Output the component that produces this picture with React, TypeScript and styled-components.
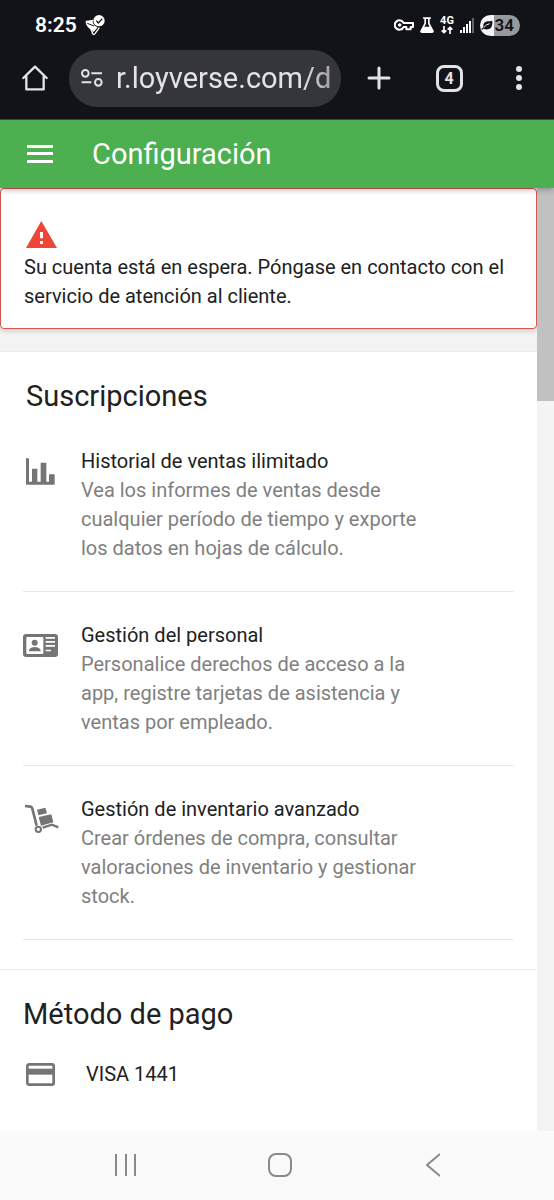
import React from 'react';
import styled, { createGlobalStyle } from 'styled-components';

const GlobalStyle = createGlobalStyle`
  *, *::before, *::after { box-sizing: border-box; }
  body { margin: 0; background: #fff; font-family: Roboto, "Liberation Sans", sans-serif; }
  h1, h2, h3, p, ul { margin: 0; padding: 0; font-weight: 400; }
  button { border: 0; padding: 0; background: none; color: inherit; font: inherit; cursor: pointer; }
  svg { display: block; flex: none; }
`;

const Page = styled.div`
  display: flex;
  flex-direction: column;
  min-height: 100vh;
`;

const StatusBar = styled.div`
  display: flex;
  align-items: center;
  justify-content: space-between;
  height: 50px;
  padding: 0 34px 0 35px;
  background: #111318;
  color: #fff;
`;

const StatusGroup = styled.div<{ $gap: number }>`
  display: flex;
  align-items: center;
  gap: ${(p) => p.$gap}px;
`;

const Clock = styled.time`
  font: 600 21px/24px Roboto, sans-serif;
`;

const Network = styled.span`
  display: flex;
  flex-direction: column;
  align-items: center;
  width: 14px;
  font: 700 11px/10px Roboto, sans-serif;
`;

const Battery = styled.span`
  display: flex;
  align-items: center;
  justify-content: space-between;
  width: 40px;
  height: 21px;
  padding: 0 6px 0 1px;
  border-radius: 11px;
  background: linear-gradient(90deg, #f4f4f4 34%, #98999b 34%);
  color: #111318;
  font: 600 17px/21px Roboto, sans-serif;
`;

const BrowserBar = styled.div`
  display: flex;
  align-items: center;
  height: 70px;
  padding: 0 0 13px 22px;
  background: #111318;
  border-bottom: 1px solid #33503c;
  color: #e3e2e9;
`;

const AddressPill = styled.label`
  display: flex;
  flex: 1;
  align-items: center;
  gap: 13px;
  min-width: 0;
  height: 57px;
  margin: 0 3px 0 21px;
  padding: 0 8px 0 12px;
  border-radius: 29px;
  background: #35363b;
`;

const Address = styled.input`
  flex: 1;
  min-width: 0;
  height: 40px;
  padding: 0;
  border: 0;
  outline: 0;
  background: none;
  color: #e3e2e9;
  font: 400 29px/40px Roboto, sans-serif;
  mask-image: linear-gradient(90deg, #000 85%, rgba(0, 0, 0, 0.6));
`;

const BarAction = styled.button`
  display: flex;
  align-items: center;
  justify-content: center;
  width: 70px;
  height: 57px;
`;

const TabCount = styled.span`
  width: 27px;
  height: 27px;
  border: 3px solid #e3e2e9;
  border-radius: 8px;
  font: 700 16px/21px Roboto, sans-serif;
  text-align: center;
`;

const AppHeader = styled.header`
  position: relative;
  z-index: 1;
  display: flex;
  align-items: center;
  gap: 39px;
  height: 68px;
  padding: 0 27px;
  background: #4caf50;
  color: #fff;
  box-shadow: 0 2px 6px rgba(0, 0, 0, 0.26);
`;

const HeaderTitle = styled.h1`
  font-size: 29px;
  line-height: 36px;
`;

const Viewport = styled.div`
  display: flex;
  flex: 1;
  background: #f3f3f3;
`;

const Content = styled.main`
  display: flex;
  flex: 1;
  flex-direction: column;
  min-width: 0;
`;

const ScrollTrack = styled.div`
  width: 17px;
  background: #f4f4f4;
`;

const ScrollThumb = styled.div`
  height: 213px;
  background: #c1c1c1;
`;

const Alert = styled.section`
  padding: 32px 24px 17px 23px;
  margin-bottom: 22px;
  border: 1px solid #d2564b;
  border-radius: 4px;
  background: #fff;
  box-shadow: 0 2px 5px rgba(0, 0, 0, 0.16);
  color: #212121;
  font-size: 20px;
  line-height: 29px;

  svg { margin: 0 0 5px 2px; }
`;

const Card = styled.section<{ $grow?: boolean }>`
  flex: ${(p) => (p.$grow ? '1 0 auto' : 'none')};
  padding: 27px 23px 29px 23px;
  border-top: 1px solid #ececec;
  background: #fff;
`;

const CardTitle = styled.h2<{ $indent: number }>`
  padding-left: ${(p) => p.$indent}px;
  color: #212121;
  font-size: 29px;
  line-height: 34px;
`;

const FeatureList = styled.ul`
  padding-top: 5px;
  list-style: none;
`;

const Feature = styled.li`
  display: flex;
  gap: 23px;
  padding: 29px 80px 28px 0;
  border-bottom: 1px solid #e8e8e8;
  font-size: 20px;
  line-height: 29px;
`;

const FeatureIcon = styled.span`
  display: flex;
  flex: none;
  align-items: center;
  justify-content: center;
  width: 35px;
  height: 48px;
  color: #757575;
`;

const FeatureName = styled.h3`
  color: #212121;
  font-size: 20px;
  line-height: 29px;
`;

const FeatureText = styled.p`
  color: #808080;
`;

const PaymentRow = styled.div`
  display: flex;
  align-items: center;
  gap: 31px;
  padding: 29px 0 0 3px;
  color: #212121;
  font-size: 20px;
  line-height: 29px;
`;

const SystemNav = styled.nav`
  display: grid;
  grid-template-columns: repeat(3, 28%);
  justify-content: center;
  height: 69px;
  padding: 0 0 2px 5px;
  background: #fafafa;
`;

const NavButton = styled.button`
  display: flex;
  align-items: center;
  justify-content: center;
`;

const SendIcon = () => (
  <svg width="20" height="21" viewBox="0 0 60 63" aria-hidden="true">
    <path d="M2 20 22 16Q24 33 38 37L26 51 15 41Q4 33 2 20Z" fill="#fff" />
    <path d="M24 17 4 19Q3 30 18 42L23 56Q26 61 30 56L43 38" stroke="#fff" strokeWidth="4" strokeLinejoin="round" fill="none" />
    <path d="M7 25 27 33" stroke="#111318" strokeWidth="3" />
    <circle cx="42" cy="17" r="17" fill="#fff" />
    <path d="m34 17 6 7 12-13" stroke="#111318" strokeWidth="4" fill="none" />
  </svg>
);

const KeyIcon = () => (
  <svg width="20" height="12" viewBox="0 0 60 36" fill="none" stroke="#fff" strokeWidth="6" aria-hidden="true">
    <path d="M29 12A14 14 0 1 0 29 24H37V31H50V24H57V12Z" strokeLinejoin="round" />
    <circle cx="17" cy="18" r="4" fill="#fff" strokeWidth="3" />
  </svg>
);

const FlaskIcon = () => (
  <svg width="14" height="16" viewBox="0 0 42 48" aria-hidden="true">
    <path d="M9 1H33V5H29V19L41 41Q43 48 36 48H6Q-1 48 1 41L13 19V5H9Z" fill="#fff" />
    <path d="M18 6H24V20L29 29H13L18 20Z" fill="#111318" />
  </svg>
);

const ArrowsIcon = () => (
  <svg width="12" height="8" viewBox="0 0 36 24" fill="none" stroke="#fff" strokeWidth="5" aria-hidden="true">
    <path d="M9 0V20M2 13 9 20 16 13M27 24V4M20 11 27 4 34 11" />
  </svg>
);

const SignalIcon = () => (
  <svg width="14" height="15" viewBox="0 0 14 15" fill="#fff" aria-hidden="true">
    <path d="M0 12h2v3H0zM3 9h2v6H3zM6 6h2v9H6zM9 3h2v12H9z" />
    <path d="M12 0h2v15h-2z" opacity="0.35" />
  </svg>
);

const LeafIcon = () => (
  <svg width="12" height="12" viewBox="0 0 36 36" aria-hidden="true">
    <path d="M34 5Q36 29 20 31Q13 32 8 29L3 33 1 30 7 25Q5 9 19 7Q28 7 34 5Z" fill="#111318" />
    <path d="M8 26Q15 16 26 14" stroke="#f4f4f4" strokeWidth="3" fill="none" />
  </svg>
);

const HomeIcon = () => (
  <svg width="26" height="26" viewBox="0 0 78 78" fill="none" stroke="currentColor" strokeWidth="7" strokeLinejoin="round" strokeLinecap="round" aria-hidden="true">
    <path d="M4 39 39 5 74 39M13 34V73H65V34" />
  </svg>
);

const TuneIcon = () => (
  <svg width="22" height="20" viewBox="0 0 66 60" fill="none" stroke="currentColor" strokeWidth="6" aria-hidden="true">
    <circle cx="13" cy="16" r="10" />
    <path d="M31 16H63M2 43H31" />
    <circle cx="52" cy="43" r="10" />
  </svg>
);

const PlusIcon = () => (
  <svg width="24" height="24" viewBox="0 0 24 24" stroke="currentColor" strokeWidth="3" strokeLinecap="round" aria-hidden="true">
    <path d="M12 2v20M2 12h20" />
  </svg>
);

const DotsIcon = () => (
  <svg width="6" height="24" viewBox="0 0 6 24" fill="currentColor" aria-hidden="true">
    <circle cx="3" cy="3" r="3" />
    <circle cx="3" cy="12" r="3" />
    <circle cx="3" cy="21" r="3" />
  </svg>
);

const MenuIcon = () => (
  <svg width="26" height="18" viewBox="0 0 26 18" fill="currentColor" aria-hidden="true">
    <path d="M0 0h26v3H0zM0 7h26v3H0zM0 15h26v3H0z" />
  </svg>
);

const WarningIcon = () => (
  <svg width="31" height="27" viewBox="0 0 93 81" aria-hidden="true">
    <path d="M46 0 93 81H0Z" fill="#f04438" />
    <path d="M42 33h9v19h-9zM42 60h9v9h-9z" fill="#fff" />
  </svg>
);

const ChartIcon = () => (
  <svg width="29" height="27" viewBox="0 0 87 81" fill="currentColor" aria-hidden="true">
    <path d="M0 1H9V71H18V32H34V71H44V14H61V71H69V49H86V80H0Z" />
  </svg>
);

const StaffCardIcon = () => (
  <svg width="35" height="23" viewBox="0 0 105 69" aria-hidden="true">
    <rect width="105" height="69" rx="9" fill="currentColor" />
    <rect x="10" y="9" width="51" height="51" rx="3" fill="#fff" />
    <circle cx="35" cy="26" r="9" fill="currentColor" />
    <path d="M18 52V48Q22 39 35 39T53 48V52Z" fill="currentColor" />
    <path d="M68 9h28v5H68zM68 21h28v5H68zM68 33h28v5H68zM68 47h16v5H68z" fill="#fff" />
  </svg>
);

const HandTruckIcon = () => (
  <svg width="36" height="32" viewBox="0 0 108 96" aria-hidden="true">
    <path d="M6 9 22 11Q27 12 28 17L41 68" fill="none" stroke="currentColor" strokeWidth="8" />
    <path d="M42 20 67 14 72 31 46 37ZM47 42 85 34 91 58 54 68Z" fill="currentColor" />
    <circle cx="46" cy="79" r="8" fill="none" stroke="currentColor" strokeWidth="6" />
    <path d="M59 74 87 65 106 73" fill="none" stroke="currentColor" strokeWidth="7" />
  </svg>
);

const PaymentIcon = () => (
  <svg width="29" height="23" viewBox="0 0 87 69" aria-hidden="true">
    <rect x="4" y="4" width="79" height="61" rx="5" fill="none" stroke="#757575" strokeWidth="8" />
    <path d="M4 17h79v18H4z" fill="#757575" />
  </svg>
);

const features = [
  {
    name: 'Historial de ventas ilimitado',
    text: 'Vea los informes de ventas desde cualquier período de tiempo y exporte los datos en hojas de cálculo.',
    Icon: ChartIcon,
  },
  {
    name: 'Gestión del personal',
    text: 'Personalice derechos de acceso a la app, registre tarjetas de asistencia y ventas por empleado.',
    Icon: StaffCardIcon,
  },
  {
    name: 'Gestión de inventario avanzado',
    text: 'Crear órdenes de compra, consultar valoraciones de inventario y gestionar stock.',
    Icon: HandTruckIcon,
  },
];

export default function App() {
  return (
    <>
      <GlobalStyle />
      <Page>
        <StatusBar>
          <StatusGroup $gap={8}>
            <Clock>8:25</Clock>
            <SendIcon />
          </StatusGroup>
          <StatusGroup $gap={6}>
            <KeyIcon />
            <FlaskIcon />
            <Network>
              4G
              <ArrowsIcon />
            </Network>
            <SignalIcon />
            <Battery>
              <LeafIcon />
              34
            </Battery>
          </StatusGroup>
        </StatusBar>

        <BrowserBar>
          <button type="button" aria-label="Inicio">
            <HomeIcon />
          </button>
          <AddressPill>
            <TuneIcon />
            <Address aria-label="Dirección" defaultValue="r.loyverse.com/d" />
          </AddressPill>
          <BarAction type="button" aria-label="Nueva pestaña">
            <PlusIcon />
          </BarAction>
          <BarAction type="button" aria-label="Pestañas">
            <TabCount>4</TabCount>
          </BarAction>
          <BarAction type="button" aria-label="Más opciones">
            <DotsIcon />
          </BarAction>
        </BrowserBar>

        <AppHeader>
          <button type="button" aria-label="Menú">
            <MenuIcon />
          </button>
          <HeaderTitle>Configuración</HeaderTitle>
        </AppHeader>

        <Viewport>
          <Content>
            <Alert role="alert">
              <WarningIcon />
              <p>Su cuenta está en espera. Póngase en contacto con el servicio de atención al cliente.</p>
            </Alert>

            <Card>
              <CardTitle $indent={3}>Suscripciones</CardTitle>
              <FeatureList>
                {features.map(({ name, text, Icon }) => (
                  <Feature key={name}>
                    <FeatureIcon>
                      <Icon />
                    </FeatureIcon>
                    <div>
                      <FeatureName>{name}</FeatureName>
                      <FeatureText>{text}</FeatureText>
                    </div>
                  </Feature>
                ))}
              </FeatureList>
            </Card>

            <Card $grow>
              <CardTitle $indent={0}>Método de pago</CardTitle>
              <PaymentRow>
                <PaymentIcon />
                <span>VISA 1441</span>
              </PaymentRow>
            </Card>
          </Content>
          <ScrollTrack>
            <ScrollThumb />
          </ScrollTrack>
        </Viewport>

        <SystemNav aria-label="Sistema">
          <NavButton type="button" aria-label="Recientes">
            <svg width="22" height="22" viewBox="0 0 22 22" stroke="#8a8a8a" strokeWidth="2" aria-hidden="true">
              <path d="M1 0v22M11 0v22M20 0v22" />
            </svg>
          </NavButton>
          <NavButton type="button" aria-label="Pantalla de inicio">
            <svg width="24" height="24" viewBox="0 0 24 24" fill="none" stroke="#8a8a8a" strokeWidth="2" aria-hidden="true">
              <rect x="1" y="1" width="22" height="22" rx="7" />
            </svg>
          </NavButton>
          <NavButton type="button" aria-label="Atrás">
            <svg width="14" height="24" viewBox="0 0 14 24" fill="none" stroke="#8a8a8a" strokeWidth="2" aria-hidden="true">
              <path d="M14 1 1 12 14 23" />
            </svg>
          </NavButton>
        </SystemNav>
      </Page>
    </>
  );
}
